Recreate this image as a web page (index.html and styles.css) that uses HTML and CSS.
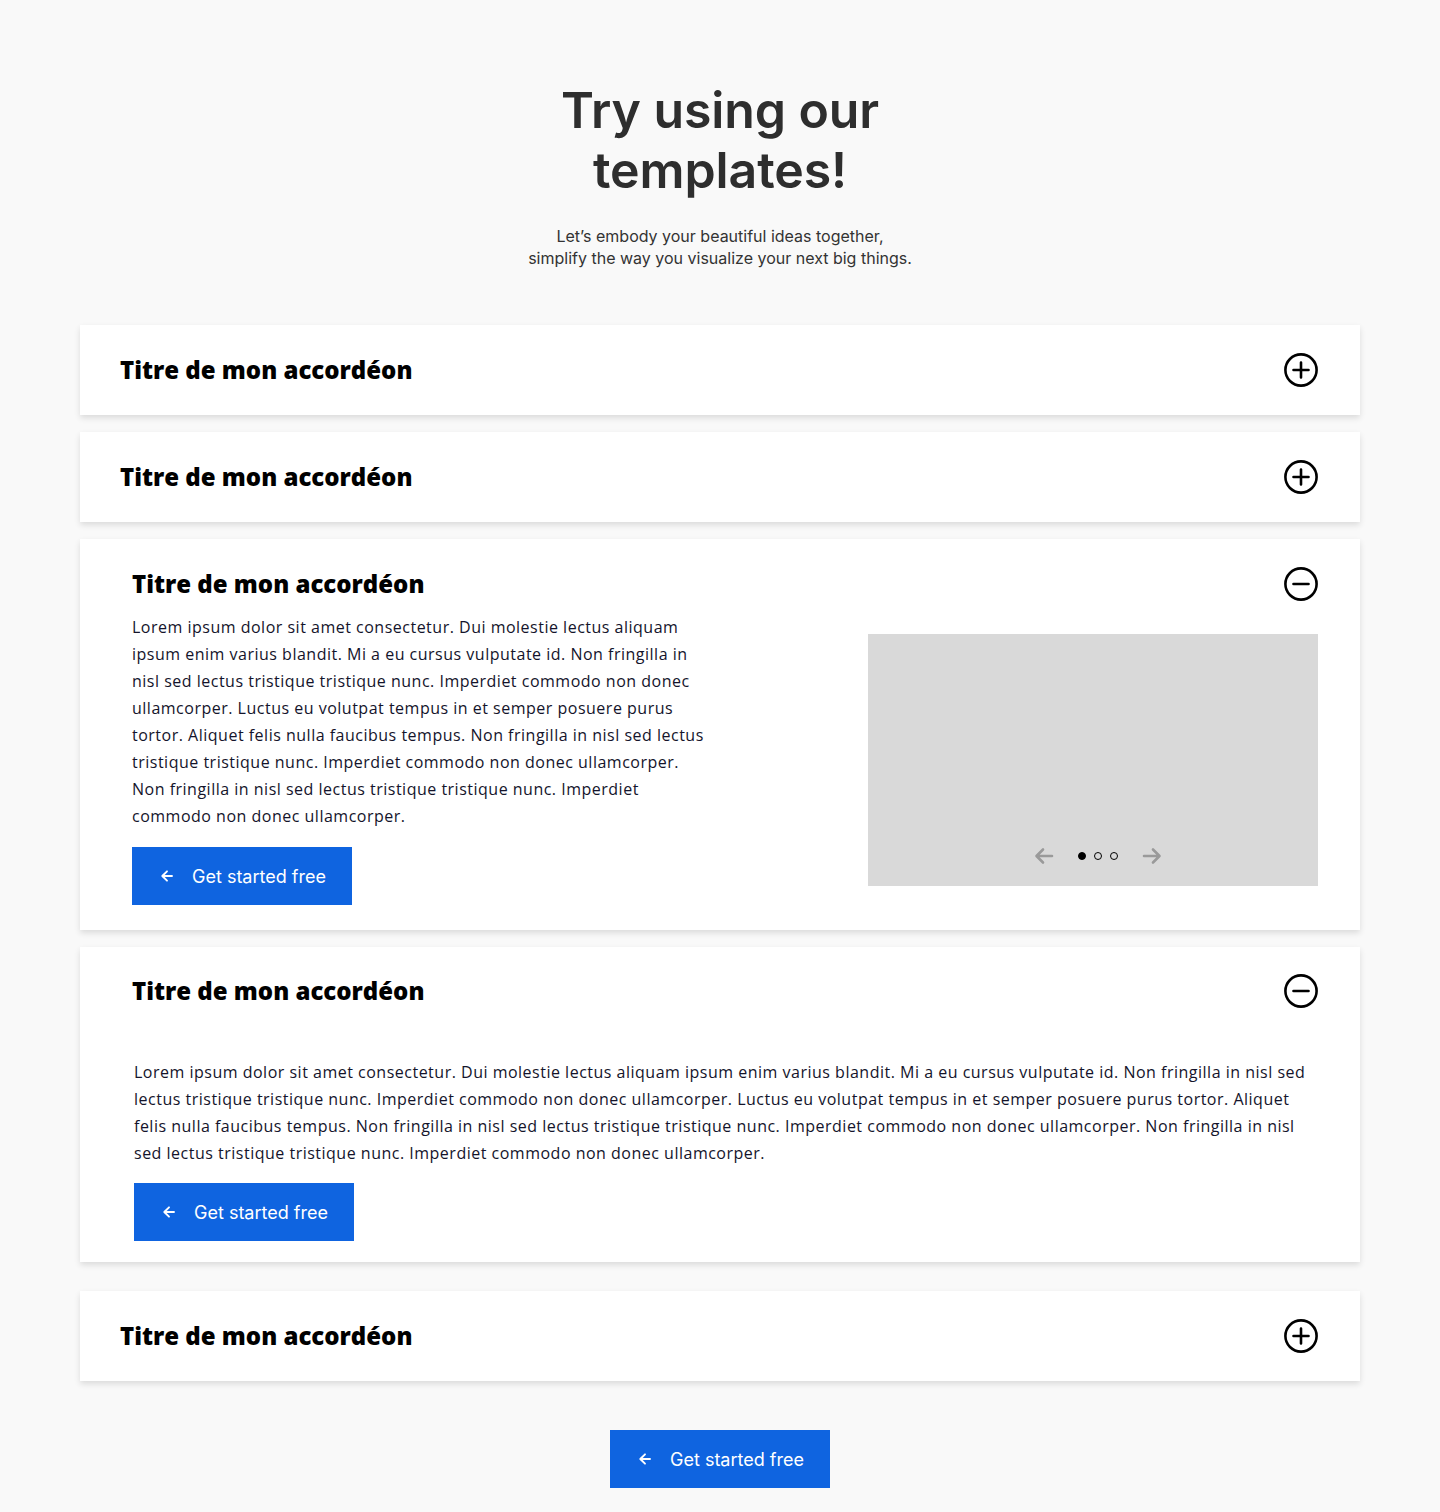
FILE: index.html
```html
<!DOCTYPE html>
<html lang="fr">
<head>
<meta charset="utf-8">
<title>Try using our templates!</title>
<link rel="stylesheet" href="styles.css">
</head>
<body>
<main class="page">
  <header class="hero">
    <h1 class="hero-title">Try using our<br>templates!</h1>
    <p class="hero-sub">Let’s embody your beautiful ideas together,<br>simplify the way you visualize your next big things.</p>
  </header>

  <section class="accordions">
    <div class="acc">
      <div class="acc-head">
        <h2 class="acc-title">Titre de mon accordéon</h2>
        <svg class="acc-icon" viewBox="0 0 36 36" width="36" height="36"><circle cx="18" cy="18" r="15.6" fill="none" stroke="#000" stroke-width="2.6"/><path d="M18 10.5v15M10.5 18h15" stroke="#000" stroke-width="2.6" stroke-linecap="round"/></svg>
      </div>
    </div>

    <div class="acc">
      <div class="acc-head">
        <h2 class="acc-title">Titre de mon accordéon</h2>
        <svg class="acc-icon" viewBox="0 0 36 36" width="36" height="36"><circle cx="18" cy="18" r="15.6" fill="none" stroke="#000" stroke-width="2.6"/><path d="M18 10.5v15M10.5 18h15" stroke="#000" stroke-width="2.6" stroke-linecap="round"/></svg>
      </div>
    </div>

    <div class="acc acc-open">
      <div class="acc-head">
        <h2 class="acc-title">Titre de mon accordéon</h2>
        <svg class="acc-icon" viewBox="0 0 36 36" width="36" height="36"><circle cx="18" cy="18" r="15.6" fill="none" stroke="#000" stroke-width="2.6"/><path d="M10.5 18h15" stroke="#000" stroke-width="2.6" stroke-linecap="round"/></svg>
      </div>
      <div class="acc-split">
        <div class="acc-col">
          <p class="acc-text">Lorem ipsum dolor sit amet consectetur. Dui molestie lectus aliquam ipsum enim varius blandit. Mi a eu cursus vulputate id. Non fringilla in nisl sed lectus tristique tristique nunc. Imperdiet commodo non donec ullamcorper. Luctus eu volutpat tempus in et semper posuere purus tortor. Aliquet felis nulla faucibus tempus. Non fringilla in nisl sed lectus tristique tristique nunc. Imperdiet commodo non donec ullamcorper. Non fringilla in nisl sed lectus tristique tristique nunc. Imperdiet commodo non donec ullamcorper.</p>
          <a class="btn" href="#">
            <svg class="btn-arrow" viewBox="0 0 14 14" width="14" height="14"><path d="M12 7H2.5M7 2.3 2.3 7 7 11.7" fill="none" stroke="#fff" stroke-width="1.9" stroke-linecap="round" stroke-linejoin="round"/></svg>
            <span>Get started free</span>
          </a>
        </div>
        <div class="media">
          <div class="carousel">
            <svg class="car-arrow" viewBox="0 0 24 24" width="24" height="24"><path d="M20 12H5M11 5.5 4.5 12 11 18.5" fill="none" stroke="#9a9a9a" stroke-width="2.6" stroke-linecap="round" stroke-linejoin="round"/></svg>
            <span class="dot dot-on"></span>
            <span class="dot"></span>
            <span class="dot"></span>
            <svg class="car-arrow" viewBox="0 0 24 24" width="24" height="24"><path d="M4 12h15M13 5.5l6.5 6.5-6.5 6.5" fill="none" stroke="#9a9a9a" stroke-width="2.6" stroke-linecap="round" stroke-linejoin="round"/></svg>
          </div>
        </div>
      </div>
    </div>

    <div class="acc acc-open acc-wide">
      <div class="acc-head">
        <h2 class="acc-title">Titre de mon accordéon</h2>
        <svg class="acc-icon" viewBox="0 0 36 36" width="36" height="36"><circle cx="18" cy="18" r="15.6" fill="none" stroke="#000" stroke-width="2.6"/><path d="M10.5 18h15" stroke="#000" stroke-width="2.6" stroke-linecap="round"/></svg>
      </div>
      <div class="acc-body">
        <p class="acc-text">Lorem ipsum dolor sit amet consectetur. Dui molestie lectus aliquam ipsum enim varius blandit. Mi a eu cursus vulputate id. Non fringilla in nisl sed lectus tristique tristique nunc. Imperdiet commodo non donec ullamcorper. Luctus eu volutpat tempus in et semper posuere purus tortor. Aliquet felis nulla faucibus tempus. Non fringilla in nisl sed lectus tristique tristique nunc. Imperdiet commodo non donec ullamcorper. Non fringilla in nisl sed lectus tristique tristique nunc. Imperdiet commodo non donec ullamcorper.</p>
        <a class="btn" href="#">
          <svg class="btn-arrow" viewBox="0 0 14 14" width="14" height="14"><path d="M12 7H2.5M7 2.3 2.3 7 7 11.7" fill="none" stroke="#fff" stroke-width="1.9" stroke-linecap="round" stroke-linejoin="round"/></svg>
          <span>Get started free</span>
        </a>
      </div>
    </div>

    <div class="acc acc-last">
      <div class="acc-head">
        <h2 class="acc-title">Titre de mon accordéon</h2>
        <svg class="acc-icon" viewBox="0 0 36 36" width="36" height="36"><circle cx="18" cy="18" r="15.6" fill="none" stroke="#000" stroke-width="2.6"/><path d="M18 10.5v15M10.5 18h15" stroke="#000" stroke-width="2.6" stroke-linecap="round"/></svg>
      </div>
    </div>
  </section>

  <div class="footer-cta">
    <a class="btn" href="#">
      <svg class="btn-arrow" viewBox="0 0 14 14" width="14" height="14"><path d="M12 7H2.5M7 2.3 2.3 7 7 11.7" fill="none" stroke="#fff" stroke-width="1.9" stroke-linecap="round" stroke-linejoin="round"/></svg>
      <span>Get started free</span>
    </a>
  </div>
</main>
</body>
</html>
```

FILE: styles.css
```css
* { box-sizing: border-box; }

html, body {
  margin: 0;
  padding: 0;
  background: #f9f9f9;
}

body {
  font-family: Inter, "Liberation Sans", sans-serif;
  color: #2e2e2e;
}

.page {
  width: 1440px;
  padding: 80px 80px 24px;
}

.hero {
  text-align: center;
}

.hero-title {
  margin: 0;
  font-size: 50px;
  line-height: 60px;
  font-weight: 600;
  color: #2e2e2e;
  letter-spacing: -0.1px;
}

.hero-sub {
  margin: 25px 0 0;
  font-size: 16px;
  line-height: 22px;
  color: #333;
}

.accordions {
  margin-top: 56px;
  display: flex;
  flex-direction: column;
  gap: 17px;
}

.acc {
  background: #fff;
  box-shadow: 0 3px 6px rgba(0, 0, 0, 0.12);
  padding: 27px 42px 27px 40px;
}

.acc-head {
  display: flex;
  align-items: center;
  justify-content: space-between;
  height: 36px;
}

.acc-title {
  margin: 0;
  font-family: "Open Sans", "Liberation Sans", sans-serif;
  font-weight: 800;
  font-size: 24px;
  line-height: 36px;
  color: #000;
}

.acc-icon {
  display: block;
  width: 36px;
  height: 36px;
  margin-right: -1px;
}

.acc-open {
  padding: 27px 42px 25px 52px;
}

.acc-split {
  display: flex;
  align-items: center;
  justify-content: space-between;
  margin-top: 12px;
}

.acc-col {
  width: 578px;
}

.acc-text {
  margin: 0;
  font-family: "Open Sans", "Liberation Sans", sans-serif;
  font-size: 16px;
  letter-spacing: 0.5px;
  line-height: 27px;
  color: #14142b;
}

.btn {
  display: flex;
  align-items: center;
  gap: 18px;
  height: 58px;
  width: 220px;
  padding: 0 0 0 28px;
  margin-top: 17px;
  background: #0f64e0;
  color: #fff;
  text-decoration: none;
  white-space: nowrap;
  font-family: Inter, "Liberation Sans", sans-serif;
  font-size: 18px;
  font-weight: 400;
}

.btn-arrow {
  display: block;
  flex: none;
}

.media {
  width: 450px;
  height: 252px;
  background: #d9d9d9;
  display: flex;
  align-items: flex-end;
  justify-content: center;
  padding-bottom: 18px;
  padding-left: 10px;
}

.carousel {
  display: flex;
  align-items: center;
  gap: 8px;
}

.car-arrow {
  display: block;
  margin: 0 14px;
}

.dot {
  width: 8px;
  height: 8px;
  border-radius: 50%;
  border: 1.3px solid #000;
  display: block;
}

.dot-on {
  background: #000;
}

.acc-wide {
  padding-top: 26px;
  padding-bottom: 21px;
}

.acc-body {
  margin-top: 50px;
  padding-left: 2px;
}

.acc-body .btn {
  margin-top: 16px;
}

.acc-last {
  margin-top: 12px;
}

.footer-cta {
  margin-top: 49px;
  display: flex;
  justify-content: center;
}

.footer-cta .btn {
  margin-top: 0;
}
```
